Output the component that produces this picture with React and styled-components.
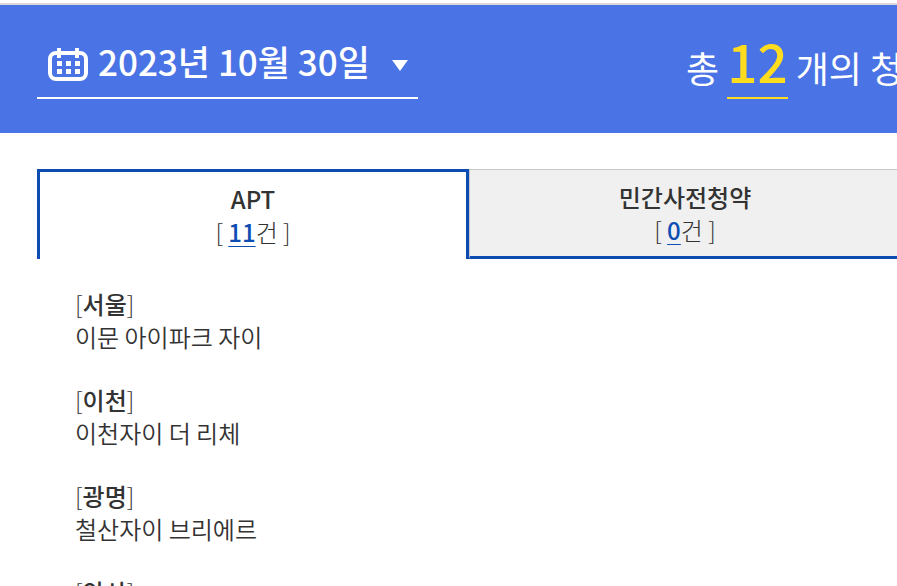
import React from "react";
import styled, { createGlobalStyle } from "styled-components";

const GlobalStyle = createGlobalStyle`
	* {
		box-sizing: border-box;
	}
	body {
		margin: 0;
		background: #fff;
		color: #333;
		font-family: "Noto Sans CJK KR", sans-serif;
		font-size: 24px;
		overflow-x: hidden;
	}
`;

const tabs = [
	{ name: "APT", count: 11 },
	{ name: "민간사전청약", count: 0 },
];

const notices = [
	{ region: "서울", name: "이문 아이파크 자이" },
	{ region: "이천", name: "이천자이 더 리체" },
	{ region: "광명", name: "철산자이 브리에르" },
	{ region: "안산" },
];

function CalendarIcon() {
	return (
		<svg width="40" height="34" viewBox="0 0 40 34" aria-hidden="true">
			<rect x="2" y="5" width="36" height="26" rx="6" fill="none" stroke="#fff" strokeWidth="4" />
			<path d="M9 0h4v10h-4zM27 0h4v10h-4z" fill="#fff" />
			<path
				d="M9 13h5v5h-5zM18 13h5v5h-5zM27 13h5v5h-5zM9 21h5v5h-5zM18 21h5v5h-5zM27 21h5v5h-5z"
				fill="#fff"
			/>
		</svg>
	);
}

function ArrowIcon() {
	return (
		<svg width="16" height="11" viewBox="0 0 16 11" aria-hidden="true">
			<path d="M0 0h16L8 11z" fill="#fff" />
		</svg>
	);
}

export default function App() {
	return (
		<>
			<GlobalStyle />
			<Header>
				<DateButton type="button">
					<CalendarIcon />
					<span>2023년 10월 30일</span>
					<ArrowIcon />
				</DateButton>
				<Total>
					총 <strong>12</strong> 개의 청약
				</Total>
			</Header>
			<main>
				<TabList role="tablist">
					{tabs.map((tab, i) => (
						<Tab key={tab.name} type="button" role="tab" aria-selected={i === 0} $active={i === 0}>
							<TabName>{tab.name}</TabName>
							<span>
								[ <Count>{tab.count}</Count>건 ]
							</span>
						</Tab>
					))}
				</TabList>
				<NoticeList>
					{notices.map((notice) => (
						<Notice key={notice.region}>
							<Region>
								[<b>{notice.region}</b>]
							</Region>
							{notice.name && <div>{notice.name}</div>}
						</Notice>
					))}
				</NoticeList>
			</main>
		</>
	);
}

const Header = styled.header`
	display: flex;
	align-items: flex-start;
	gap: 268px;
	height: 130px;
	margin-top: 3px;
	padding: 28px 0 0 37px;
	border-top: 2px solid #d9d9d9;
	background: #4a73e5;
	color: #fff;
	white-space: nowrap;
	overflow: hidden;
`;

const DateButton = styled.button`
	display: flex;
	flex: none;
	align-items: center;
	gap: 10px;
	width: 381px;
	height: 66px;
	padding: 0 11px;
	border: 0;
	border-bottom: 2px solid #fff;
	background: none;
	color: inherit;
	font: 500 35px/56px "Noto Sans CJK KR", sans-serif;
	cursor: pointer;
	span {
		height: 64px;
	}
	svg {
		flex: none;
	}
	svg:last-child {
		margin-left: 12px;
	}
`;

const Total = styled.p`
	margin: 0;
	font-size: 36px;
	line-height: 54px;
	strong {
		display: inline-block;
		height: 66px;
		border-bottom: 2px solid #ffdc1e;
		color: #ffdc1e;
		font-size: 53px;
		font-weight: 500;
	}
`;

const TabList = styled.div`
	display: flex;
	margin: 36px 0 0 37px;
	overflow: hidden;
`;

const Tab = styled.button`
	display: flex;
	flex: 1 0 432px;
	flex-direction: column;
	align-items: center;
	height: 90px;
	padding: 10px 0 0;
	border: solid #0d4db3;
	border-width: 3px 3px 0;
	background: #fff;
	color: #333;
	font: 300 24px/33px "Noto Sans CJK KR", sans-serif;
	cursor: pointer;
	${(props) =>
		!props.$active &&
		`
		border-color: #c8c8c8 #c8c8c8 #0d4db3;
		border-width: 1px 1px 3px;
		background: #f0f0f0;
	`}
`;

const TabName = styled.span`
	font-weight: 500;
`;

const Count = styled.b`
	color: #0d4db3;
	font-weight: 500;
	text-decoration: underline;
	text-decoration-thickness: 1px;
	text-underline-offset: 4px;
`;

const NoticeList = styled.ul`
	margin: 0;
	padding: 28px 75px;
	list-style: none;
`;

const Notice = styled.li`
	margin-bottom: 30px;
	font-weight: 350;
	line-height: 33px;
`;

const Region = styled.div`
	font-weight: 300;
	b {
		font-weight: 500;
	}
`;
